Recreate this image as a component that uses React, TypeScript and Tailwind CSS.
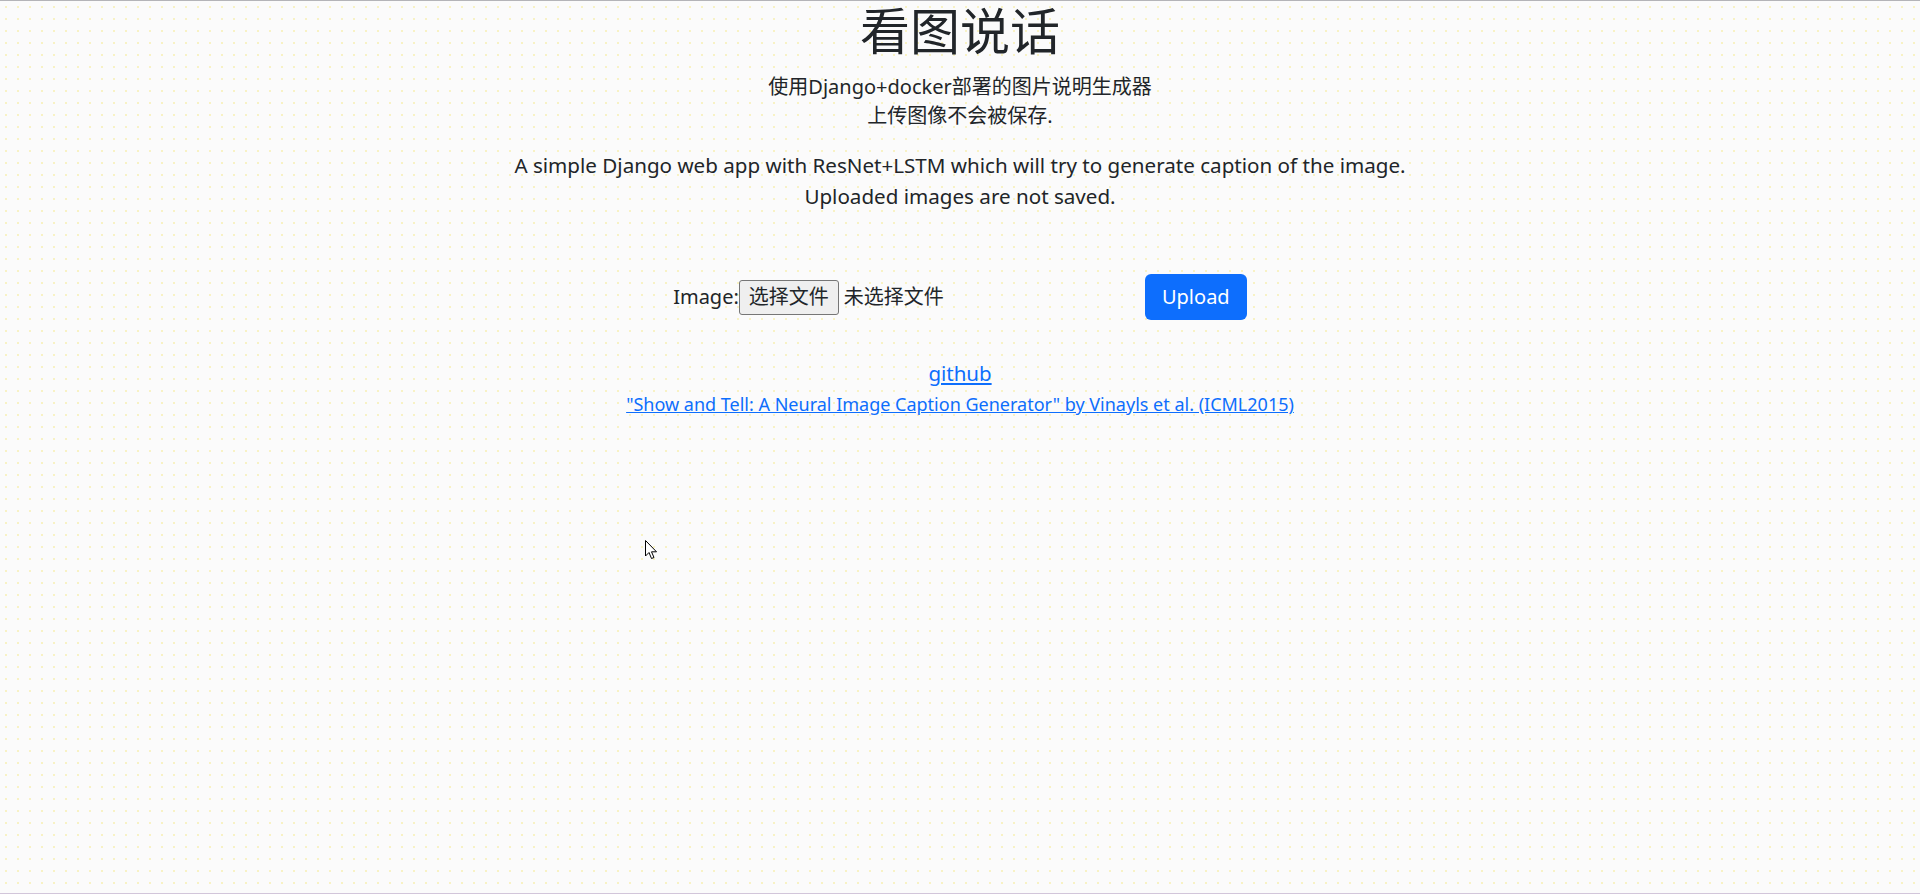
export default function App() {
  return (
    <div className="relative min-h-[894px] w-full border-t border-b border-t-[#b4b4b8] border-b-[#d2c6da] bg-[#fbfbfb] bg-[radial-gradient(#f8f2c4_0.8px,transparent_0.8px)] bg-[length:12px_12px] text-[#212529] font-['Noto_Sans','Noto_Sans_CJK_SC',sans-serif]">
      <div className="flex flex-col items-center text-center">
        <h1 className="text-[50px] leading-[60px] font-normal">看图说话</h1>
        <p className="mt-[11px] text-[20px] leading-[29px]">
          使用Django+docker部署的图片说明生成器
          <br />
          上传图像不会被保存.
        </p>
        <p className="mt-[20px] text-[20.6px] leading-[31px]">
          A simple Django web app with ResNet+LSTM which will try to generate caption of the image.
          <br />
          Uploaded images are not saved.
        </p>

        <form className="mt-[62px] flex items-center text-[20px]" onSubmit={(e) => e.preventDefault()}>
          <label>Image:</label>
          <div className="flex w-[401px] items-center">
            <span className="flex h-[35px] items-center rounded-[3px] border border-[#767676] bg-[#efefef] px-[9px] text-[20px]">
              选择文件
            </span>
            <span className="ml-[5px]">未选择文件</span>
          </div>
          <button
            type="submit"
            className="ml-[5px] h-[46px] w-[102px] rounded-[6px] bg-[#0d6efd] text-[20px] text-white"
          >
            Upload
          </button>
        </form>

        <a href="#" className="mt-[38px] text-[20.5px] leading-[30px] text-[#0d6efd] underline">
          github
        </a>
        <a href="#" className="mt-[3px] text-[18px] leading-[26px] text-[#0d6efd] underline">
          "Show and Tell: A Neural Image Caption Generator" by Vinayls et al. (ICML2015)
        </a>
      </div>

      <svg className="absolute left-[645px] top-[539px]" width="13" height="20" viewBox="0 0 13 20">
        <path
          d="M0.5 0.5 L0.5 16 L4 12.5 L6.5 18.5 L9 17.5 L6.5 11.8 L11.5 11.8 Z"
          fill="#fff"
          stroke="#000"
          strokeWidth="1"
          strokeLinejoin="round"
        />
      </svg>
    </div>
  )
}
